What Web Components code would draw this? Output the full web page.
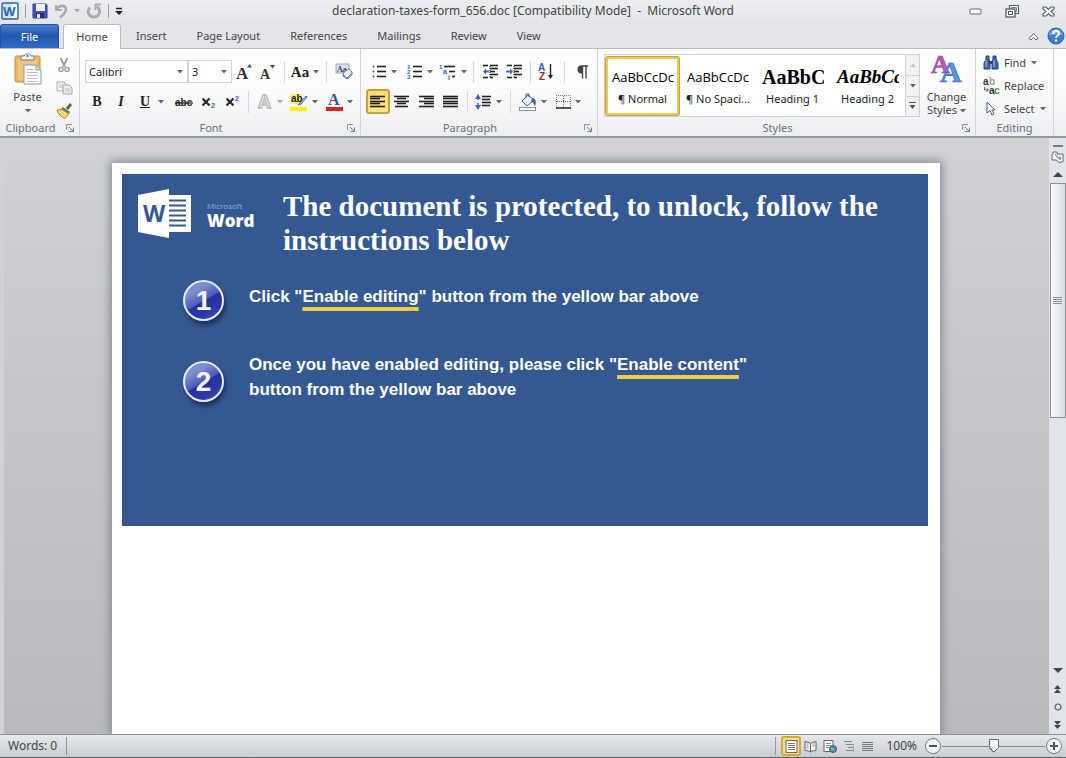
<!DOCTYPE html>
<html lang="en">
<head>
<meta charset="utf-8">
<title>declaration-taxes-form_656.doc - Microsoft Word</title>
<style>
html, body { margin: 0; height: 100%; }
body { font: 11px/16px "Noto Sans", "Open Sans", sans-serif; color: #444; overflow: hidden; background: #c6c8cc; }
</style>
</head>
<body>
<word-app></word-app>
<script>
const svg = (w, h, body) => `<svg width="${w}" height="${h}" viewBox="0 0 ${w} ${h}" fill="none" aria-hidden="true">${body}</svg>`;
const lines = (rows, color = '#222') => rows.map(([x, y, w]) => `<path d="M${x} ${y}.5h${w}" stroke="${color}" stroke-width="1.6"/>`).join('');
const serif = 'font-family="Liberation Serif,serif" font-weight="bold"';
const sans = 'font-family="Liberation Sans,sans-serif" font-weight="bold"';
const open = 'font-family="Open Sans,sans-serif" font-weight="bold"';

const ICONS = {
  word: svg(18, 18, `<rect x="1" y="1" width="16" height="16" rx="1" fill="#cfe3f7" stroke="#2c62ab" stroke-width="1.4"/><path d="M11 2h5v14h-5z" fill="#fff"/><text x="2" y="14" font-size="13" fill="#2a67b5" ${open}>W</text>`),
  save: svg(16, 16, `<path d="M1 1h13l1 1v13H1z" fill="#4355b4" stroke="#2f3c91"/><path d="M4 1h9v7H4z" fill="#eef2fb"/><path d="M4 10h8v5H4z" fill="#25307a"/><path d="M5 11h3v4H5z" fill="#e9edf8"/>`),
  undo: svg(14, 16, `<path d="M2 2v5h6" stroke="#a9abae" stroke-width="2"/><path d="M2.500 6.500C5 2 11.500 1.500 12 6c0 4-3 6-6 8.500" stroke="#a9abae" stroke-width="2.600"/>`),
  redo: svg(16, 16, `<path d="M4 4.500C0 9 3 14 8 14s8-6 3-10.500" stroke="#a9abae" stroke-width="2.800"/><path d="M9 1.500h6M9.500 1v6" stroke="#a9abae" stroke-width="2"/>`),
  more: svg(8, 9, `<path d="M1 1.500h6" stroke="#222" stroke-width="1.500"/><path d="M0 4h8L4 8z" fill="#222"/>`),
  min: svg(13, 7, `<rect x="1" y="1" width="11" height="5" rx="1" fill="#fff" stroke="#666"/>`),
  restore: svg(14, 13, `<path d="M4.500 4V.5h9v8H10" fill="#fff" stroke="#555b66" stroke-width="1.200"/><path d="M6.500 4V2.500h5v4H10" stroke="#777d88"/><rect x="1" y="4" width="9" height="8" fill="#fff" stroke="#555b66" stroke-width="1.300"/><rect x="3.500" y="6.500" width="4" height="3" stroke="#555b66"/>`),
  close: svg(13, 11, `<path d="M1 1h3l2.500 2.500L9 1h3v2L9 5.500 12 8v2H9L6.500 7.500 4 10H1V8l3-2.500L1 3z" fill="#fff" stroke="#555b66" stroke-width="1.100"/>`),
  collapse: svg(11, 9, `<path d="M1 6.500L5.500 1.500 10 6.500 8 8 5.500 5.500 3 8z" fill="#fff" stroke="#555b66"/>`),
  help: svg(18, 18, `<circle cx="9" cy="9" r="8" fill="#3f7bd0" stroke="#2f62ad"/><path d="M2 8a7 6 0 0 1 14 0z" fill="#6fa0e2"/><path d="M6 7c0-4 6-4 6-.5C12 9 9 8.500 9 11" stroke="#fff" stroke-width="2"/><rect x="8" y="12.500" width="2" height="2" fill="#fff"/>`),
  paste: svg(28, 32, `<rect x="1" y="3" width="25" height="26" rx="1.500" fill="#e9b863" stroke="#c8923c"/><rect x="4" y="6" width="19" height="21" fill="#f0c77e"/><path d="M7 3h3c1-3 6-3 7 0h3v4H7z" fill="#f3f4f6" stroke="#777b82"/><circle cx="13.500" cy="3" r="1" fill="#555"/><path d="M10 12h12l5 5v14H10z" fill="#fff" stroke="#8f98a8"/><path d="M22 12v5h5" fill="#d9dfe9" stroke="#8f98a8"/><path d="M13 16.500h7M13 19.500h11M13 22.500h11M13 25.500h11M13 28.500h11" stroke="#b6c0d2"/>`),
  cut: svg(12, 16, `<path d="M2.500 1L7 10M9.500 1L5 10" stroke="#9b9da0" stroke-width="1.800"/><circle cx="3" cy="12.500" r="2" stroke="#9b9da0" stroke-width="1.600"/><circle cx="9" cy="12.500" r="2" stroke="#9b9da0" stroke-width="1.600"/>`),
  copy: svg(17, 14, `<path d="M1 1h7l2 2v7H1z" fill="#f3f3f4" stroke="#a9abae"/><path d="M7 4h6l3 3v6H7z" fill="#eee" stroke="#a0a2a5"/><path d="M3 4h4M3 6h3M9 8h5M9 10h5" stroke="#b9bbbe"/>`),
  painter: svg(17, 16, `<path d="M15 1l-4 5" stroke="#7a5f3b" stroke-width="3"/><path d="M7 4l7 5-2 3-8-5z" fill="#6d7480"/><path d="M1 7l4-1 8 5-4 4.500C5 14 2 11 1 7z" fill="#f2cf57" stroke="#ba8d28"/><path d="M3 8.500l6 5M5 7.500l6 4" stroke="#fff0ad"/>`),
  grow: svg(16, 18, `<text x="0" y="16" font-size="17" fill="#333" ${serif}>A</text><path d="M11 4.500L13.500 1 16 4.500z" fill="#3c4f86"/>`),
  shrink: svg(16, 18, `<text x="1" y="16" font-size="14" fill="#333" ${serif}>A</text><path d="M11 2L13.500 5.500 16 2z" fill="#3c4f86"/>`),
  clear: svg(18, 18, `<rect x="1" y="1" width="13" height="9" fill="#dbe3f1" stroke="#8696b5" stroke-width=".8"/><text x="2" y="8.500" font-size="8" fill="#2f3c60" ${serif}>Aa</text><path d="M9 9l5-3 3 3v3l-5 4-4-3z" fill="#eef2fa" stroke="#5f75a6"/><path d="M8 12l4 3 5-5" stroke="#5f75a6"/>`),
  strike: svg(18, 14, `<text x="0" y="11" font-size="10" fill="#222" ${sans}>abc</text><path d="M0 8h18" stroke="#222" stroke-width="1.200"/>`),
  sub: svg(15, 14, `<path d="M1.500 3.500l7 7M8.500 3.500l-7 7" stroke="#222" stroke-width="2"/><text x="10" y="13" font-size="7" fill="#2f5f9f" ${sans}>2</text>`),
  sup: svg(15, 14, `<path d="M1.500 3.500l7 7M8.500 3.500l-7 7" stroke="#222" stroke-width="2"/><text x="10" y="6" font-size="7" fill="#2f5f9f" ${sans}>2</text>`),
  effects: svg(17, 17, `<text x="2" y="15" font-size="18" fill="#fff" stroke="#b9bbbe" stroke-width="1.500" ${sans}>A</text>`),
  highlight: svg(18, 18, `<rect x="1" y="1" width="10" height="10" fill="#fff04d"/><text x="1" y="9" font-size="10" fill="#222" ${sans}>ab</text><path d="M16 3l-6 7-2 2 3-1 6-7z" fill="#cfe0f5" stroke="#46659a"/><rect x="0" y="14" width="17" height="4" fill="#fff200"/>`),
  color: svg(17, 18, `<text x="2" y="12" font-size="16" fill="#345491" ${serif}>A</text><rect x="0" y="14" width="17" height="4" fill="#e02020"/>`),
  bullets: svg(16, 16, `<path d="M2 2h1v1H2zM2 7h1v1H2zM2 12h1v1H2z" fill="#3f66aa" stroke="#3f66aa"/>` + lines([[6, 2, 9], [6, 7, 9], [6, 12, 9]])),
  numbers: svg(16, 16, ['1', '2', '3'].map((n, i) => `<text x="0" y="${5 + i * 5}" font-size="6" fill="#2f5fae" ${sans}>${n}</text>`).join('') + lines([[6, 2, 9], [6, 7, 9], [6, 12, 9]])),
  multi: svg(18, 16, `<text x="0" y="5" font-size="6" fill="#2f5fae" ${sans}>1</text><text x="4" y="10" font-size="7" fill="#2f5fae" ${sans}>a</text><text x="9" y="16" font-size="7" fill="#2f5fae" ${sans}>i</text>` + lines([[5, 2, 11], [10, 7, 6], [13, 12, 3]])),
  outdent: svg(17, 15, lines([[1, 1, 5], [8, 1, 8], [8, 4, 8], [8, 7, 5], [8, 10, 8], [1, 13, 5], [8, 13, 3]]) + `<path d="M8 2v12" stroke="#222" stroke-dasharray="1 1"/><path d="M1 7.500l3-3v2h3v2H4v2z" fill="#3f66aa"/>`),
  indent: svg(17, 15, lines([[1, 1, 5], [8, 1, 8], [8, 4, 8], [8, 7, 5], [8, 10, 8], [1, 13, 5], [8, 13, 3]]) + `<path d="M8 2v12" stroke="#222" stroke-dasharray="1 1"/><path d="M7 7.500l-3-3v2H0v2h4v2z" fill="#3f66aa"/>`),
  sort: svg(16, 17, `<text x="0" y="8" font-size="10" fill="#2f5fae" ${sans}>A</text><text x="1" y="17" font-size="10" fill="#8c2f2f" ${sans}>Z</text><path d="M12.500 1v13" stroke="#222" stroke-width="1.400"/><path d="M10 12h5l-2.500 4z" fill="#222"/>`),
  pilcrow: svg(11, 14, `<path d="M5.500 8C-.5 8 0 1 5 1h6M5.500 1v12.500M9 1v12.500" stroke="#444" stroke-width="1.400"/><path d="M5.500 1v7C0 8 0 1 5.500 1z" fill="#444"/>`),
  left: svg(16, 14, lines([[0, 1, 15], [0, 3, 10], [0, 6, 15], [0, 8, 10], [0, 11, 15]])),
  center: svg(16, 14, lines([[0, 1, 15], [3, 3, 9], [0, 6, 15], [3, 8, 9], [1, 11, 13]])),
  right: svg(16, 14, lines([[0, 1, 15], [5, 3, 10], [0, 6, 15], [5, 8, 10], [0, 11, 15]])),
  justify: svg(16, 14, lines([[0, 1, 15], [0, 3, 15], [0, 6, 15], [0, 8, 15], [0, 11, 15]])),
  spacing: svg(17, 18, lines([[7, 3, 9], [7, 6, 8], [7, 9, 9], [7, 12, 8]]) + `<path d="M3 4v10" stroke="#3f66aa" stroke-width="1.500" stroke-dasharray="3 3"/><path d="M0 6l3-5 3 5zM0 12l3 5 3-5z" fill="#3f66aa"/>`),
  bucket: svg(18, 18, `<path d="M3 8l6-6 6 5-7 6z" fill="#e6eefb" stroke="#4c5f86"/><path d="M7 5V1h3v3" stroke="#4c5f86"/><path d="M13 5c5 0 4 6 3 8-2-2-1-4-4-4z" fill="#3f66aa"/><rect x=".5" y="14.500" width="16" height="3" fill="#fff" stroke="#8b8f96"/>`),
  borders: svg(15, 14, `<path d="M.5 13V.5h14V13M7.500 1v12M1 6.500h13" stroke="#777" stroke-dasharray="1 1"/><path d="M0 13h15" stroke="#222" stroke-width="1.500"/>`),
  change: svg(32, 30, `<text x="0" y="19" font-size="26" fill="#b95bb5" stroke="#8f3f92" stroke-width=".6" ${serif}>A</text><text x="9" y="28" font-size="30" fill="#5b94e0" stroke="#3567b7" stroke-width=".6" ${serif}>A</text>`),
  find: svg(16, 15, `<path d="M3 1h3v3l1 3v7H1V8l2-4zM10 1h3v3l2 4v6H9V7l1-3z" fill="#3c64a8" stroke="#274476"/><path d="M6 6h4v3H6z" fill="#274476"/><path d="M3 5v7M11 5v7" stroke="#a9c5ee"/>`),
  replace: svg(17, 17, `<text x="0" y="8" font-size="10" fill="#333" ${sans}>a</text><text x="6" y="8" font-size="10" fill="#9a9da3" ${sans}>b</text><text x="6" y="17" font-size="10" fill="#333" ${sans}>a</text><text x="11" y="17" font-size="10" fill="#3c8f3c" ${sans}>c</text><path d="M1.500 10v3H5M3.500 11l2 2-2 2" stroke="#3a5f9e"/>`),
  select: svg(10, 15, `<path d="M1 1v11l3-2.500 2 4.500 2-1-2-4h3z" fill="#fff" stroke="#3f5d96"/>`),
  launcher: svg(8, 8, `<path d="M.5 6V.5H6" stroke="#8b8f96"/><path d="M3 3l4 4M7.500 3.500v4h-4" stroke="#777b82"/>`),
  caret: svg(6, 4, `<path d="M0 0h6L3 3.500z" fill="#666"/>`),
  caretLight: svg(6, 4, `<path d="M0 0h6L3 3.500z" fill="#aaa"/>`),
  caretUp: svg(6, 4, `<path d="M0 4h6L3 .5z" fill="#c2c4c8"/>`),
  galleryMore: svg(8, 8, `<path d="M0 .5h7" stroke="#555"/><path d="M.5 3h6l-3 4z" fill="#555"/>`),
  ruler: svg(13, 13, `<path d="M2 1h4v2h6v8H9v1L5 9H1V3h1z" fill="#f4f5f7" stroke="#6b6f78"/><path d="M4 3l3 4h3M9 6v3" stroke="#6b6f78"/>`),
  up: svg(10, 6, `<path d="M0 6h10L5 1z" fill="#444"/>`),
  down: svg(10, 6, `<path d="M0 0h10L5 5z" fill="#444"/>`),
  prev: svg(7, 8, `<path d="M0 4h7L3.500 0zM0 8h7L3.500 4z" fill="#444"/>`),
  next: svg(7, 8, `<path d="M0 0h7L3.500 4zM0 4h7L3.500 8z" fill="#444"/>`),
  browse: svg(8, 8, `<circle cx="4" cy="4" r="3" stroke="#555" stroke-width="1.200"/>`),
  print: svg(13, 13, `<rect x="1" y=".5" width="11" height="12" fill="#fff" stroke="#666"/><path d="M3 3.500h7M3 5.500h7M3 7.500h7M3 9.500h7" stroke="#777"/>`),
  reading: svg(13, 13, `<path d="M1 1.500l4 1 1.500 1 1.500-1 4-1v9l-4 .5-1.500 1-1.500-1-4-.5zM6.500 3v9" fill="#f4f4f6" stroke="#666"/><path d="M2.500 4h2M2.500 6h2M2.500 8h2M8.500 4h2M8.500 6h2" stroke="#888"/>`),
  web: svg(14, 13, `<rect x="1" y=".5" width="9" height="11" fill="#f8f8fa" stroke="#666"/><path d="M3 3.500h5M3 5.500h5M3 7.500h3" stroke="#888"/><circle cx="10" cy="9" r="3.500" fill="#4f86a8" stroke="#3b6b80"/><path d="M8 8l3 2" stroke="#a9d69a" stroke-width="1.500"/>`),
  outline: svg(12, 13, `<path d="M1 1.500h8M3 4.500h7M5 7.500h5M3 10.500h7" stroke="#888"/><path d="M10.500 4v8" stroke="#aaa"/>`),
  draft: svg(11, 11, `<path d="M0 1.500h11M0 3.500h11M0 5.500h11M0 7.500h11M0 9.500h11" stroke="#777"/>`),
  minus: svg(18, 18, `<circle cx="9" cy="9" r="7.500" fill="#f4f5f7" stroke="#777b82"/><path d="M5 9h8" stroke="#555" stroke-width="2"/>`),
  plus: svg(18, 18, `<circle cx="9" cy="9" r="7.500" fill="#f4f5f7" stroke="#777b82"/><path d="M5 9h8M9 5v8" stroke="#555" stroke-width="2"/>`),
  logo: svg(56, 50, `<path d="M30 7h24v37H30z" fill="#fff"/><path d="M32 12.500h17M32 17.500h17M32 22.500h17M32 27.500h17M32 32.500h17M32 37.500h17" stroke="#345992" stroke-width="2"/><path d="M1 7L32 1v49L1 44z" fill="#fff"/><text x="6" y="34" font-size="23" fill="#345992" ${open}>W</text>`)
};

const define = (name, render) => customElements.define(name, class extends HTMLElement {
  connectedCallback() {
    if (this.shadowRoot) return;
    this.attachShadow({ mode: 'open' }).innerHTML = `<style>
      *, *::before, *::after { box-sizing: border-box; }
      button, input, select { font: inherit; color: inherit; margin: 0; padding: 0; border: 0; background: none; }
      svg { display: block; overflow: visible; }
    </style>` + render(this);
  }
});
const icon = name => `<ui-icon name="${name}"></ui-icon>`;
const attr = (el, key, fallback = '') => el.getAttribute(key) ?? fallback;

define('ui-icon', el => `<style>:host { display: block; flex: none; }</style>${ICONS[attr(el, 'name')]}`);

/* Square or split command button; width comes from --w, height from --h. */
define('tool-button', el => `<style>
  :host { display: block; flex: none; width: var(--w, 24px); height: var(--h, 25px); }
  button { width: 100%; height: 100%; display: flex; align-items: center; justify-content: center; gap: var(--gap, 4px); border: 1px solid transparent; border-radius: 3px; color: #222; }
  :host([pressed]) button { background: linear-gradient(#fbdc74, #fbe68a); border: 2px solid #c9a03f; }
</style><button type="button" aria-label="${attr(el, 'label')}">${el.hasAttribute('icon') ? icon(attr(el, 'icon')) : '<slot></slot>'}${el.hasAttribute('split') ? icon(attr(el, 'split') || 'caret') : ''}</button>`);

define('tool-separator', () => `<style>
  :host { display: flex; flex: none; justify-content: center; align-items: center; width: var(--w, 8px); }
  i { width: 1px; height: 22px; background: #d6d8dc; }
</style><i></i>`);

define('combo-box', el => `<style>
  :host { display: flex; flex: none; position: relative; width: var(--w); height: 23px; background: #fff; border: 1px solid #d3d5d9; }
  select { appearance: none; flex: 1; padding: 0 3px; color: #222; }
  ui-icon { position: absolute; right: 4px; top: 9px; pointer-events: none; }
</style><select aria-label="${attr(el, 'label')}"><option>${attr(el, 'value')}</option></select>${icon('caret')}`);

define('ribbon-group', el => `<style>
  :host { display: flex; flex-direction: column; flex: none; width: var(--w); border-right: 1px solid #d3d5d9; }
  .body { flex: 1; min-height: 0; display: flex; padding: var(--pad, 10px 4px 0); }
  footer { display: flex; align-items: center; height: 16px; color: #6b6f76; }
  .name { flex: 1; text-align: center; }
  button { width: 18px; height: 16px; display: grid; place-items: center; }
</style><div class="body"><slot></slot></div>
<footer><span class="name">${attr(el, 'name')}</span>${el.hasAttribute('launcher') ? `<button type="button" aria-label="${attr(el, 'name')} options">${icon('launcher')}</button>` : ''}</footer>`);

define('title-bar', () => `<style>
  :host { display: grid; grid-template-columns: 1fr auto 1fr; align-items: center; height: 22px; background: linear-gradient(#eceef0, #e3e5e8); }
  .quick, .window { display: flex; align-items: center; }
  .quick { gap: 6px; padding-left: 1px; }
  .window { justify-content: flex-end; gap: 23px; padding-right: 11px; }
  button { display: block; }
  i { width: 1px; height: 14px; background: #999; }
  h1 { margin: 0; font: inherit; font-size: 12px; color: #444; white-space: pre; }
</style>
<div class="quick">${icon('word')}<i></i><button aria-label="Save">${icon('save')}</button><button aria-label="Undo">${icon('undo')}</button>${icon('caretLight')}<button aria-label="Redo">${icon('redo')}</button><i></i><button aria-label="Customize">${icon('more')}</button></div>
<h1>declaration-taxes-form_656.doc [Compatibility Mode]  -  Microsoft Word</h1>
<div class="window"><button aria-label="Minimize">${icon('min')}</button><button aria-label="Restore">${icon('restore')}</button><button aria-label="Close">${icon('close')}</button></div>`);

define('tab-strip', () => `<style>
  :host { display: flex; align-items: stretch; height: 27px; padding-top: 2px; background: #e3e5e8; border-bottom: 1px solid #b9bcc2; }
  button { padding: 0 15px; white-space: nowrap; }
  .file { width: 59px; margin-right: 4px; color: #fff; background: linear-gradient(#4a7fd0, #2357ae 45%, #2f6bc6); border: 1px solid #2450a0; border-bottom: 0; border-radius: 3px 3px 0 0; padding: 0; }
  .active { position: relative; width: 58px; padding: 0; background: #fff; border: 1px solid #b9bcc2; border-bottom: 0; border-radius: 3px 3px 0 0; margin-bottom: -1px; }
  .end { flex: 1; display: flex; justify-content: flex-end; align-items: center; gap: 8px; padding-right: 1px; }
</style>
<button class="file">File</button><button class="active">Home</button>${['Insert', 'Page Layout', 'References', 'Mailings', 'Review', 'View'].map(t => `<button>${t}</button>`).join('')}
<div class="end">${icon('collapse')}${icon('help')}</div>`);

define('style-option', el => `<style>
  :host { display: block; flex: none; width: 75px; height: 60px; }
  button { width: 100%; height: 100%; padding: 2px 3px 0; border: 3px solid transparent; border-radius: 3px; display: flex; flex-direction: column; justify-content: center; gap: 3px; color: #222; }
  :host([selected]) button { border-color: #eccb58; outline: 1px solid #c9a03f; outline-offset: -1px; }
  .sample { width: 63px; height: 22px; padding-left: 1px; overflow: hidden; white-space: nowrap; text-align: left; font: var(--sample, 13px/22px "Open Sans", sans-serif); color: #000; }
  .name { width: 63px; text-align: center; white-space: nowrap; }
</style><button type="button"><span class="sample">${attr(el, 'sample')}</span><span class="name">${attr(el, 'name')}</span></button>`);

define('style-gallery', () => `<style>
  :host { display: flex; flex: 1; height: 63px; background: #fff; border: 1px solid #cfd1d5; }
  .items { flex: 1; display: flex; align-items: center; overflow: hidden; }
  .scroll { width: 14px; display: grid; grid-template-rows: 1fr 1fr 1fr; border-left: 1px solid #cfd1d5; background: #f1f2f4; }
  .scroll button { display: grid; place-items: center; }
  .scroll button + button { border-top: 1px solid #cfd1d5; }
</style>
<div class="items">
  <style-option selected sample="AaBbCcDc" name="¶ Normal"></style-option>
  <style-option sample="AaBbCcDc" name="¶ No Spaci..."></style-option>
  <style-option sample="AaBbC" name="Heading 1" style="--sample: bold 20px/22px 'Liberation Serif', serif"></style-option>
  <style-option sample="AaBbCc" name="Heading 2" style="--sample: italic bold 19px/22px 'Liberation Serif', serif"></style-option>
</div>
<div class="scroll"><button aria-label="Scroll up">${icon('caretUp')}</button><button aria-label="Scroll down">${icon('caret')}</button><button aria-label="More styles">${icon('galleryMore')}</button></div>`);

define('big-button', el => `<style>
  :host { display: block; flex: none; width: var(--w); }
  button { width: 100%; display: flex; flex-direction: column; align-items: center; gap: var(--gap, 4px); color: #444; line-height: 13px; }
  ::slotted(ui-icon) { display: inline-block; vertical-align: middle; }
</style><button type="button">${icon(attr(el, 'icon'))}<span><slot></slot></span></button>`);

define('menu-button', el => `<style>
  :host { display: block; }
  button { display: flex; align-items: center; height: 23px; gap: 5px; white-space: nowrap; color: #444; }
  .icon { width: 16px; display: grid; place-items: center; }
</style><button type="button"><span class="icon">${icon(attr(el, 'icon'))}</span><slot></slot>${el.hasAttribute('split') ? icon('caret') : ''}</button>`);

define('ribbon-bar', () => {
  const t = (label, w, rest) => `<tool-button label="${label}" style="--w:${w}px" ${rest}></tool-button>`;
  const glyph = (label, w, html, rest = '') => `<tool-button label="${label}" style="--w:${w}px" ${rest}>${html}</tool-button>`;
  const sep = w => `<tool-separator style="--w:${w}px"></tool-separator>`;
  return `<style>
  :host { display: flex; height: 89px; padding-right: 12px; background: linear-gradient(#fff, #fbfbfc 50%, #eceef1); border-bottom: 2px solid #96999e; }
  .rows { display: flex; flex-direction: column; gap: 5px; }
  .row { display: flex; align-items: center; height: 25px; }
  .stack { display: flex; flex-direction: column; --h: 23px; }
  .styles { flex: 1; }
  .glyph { font: bold 14px/16px "Liberation Serif", serif; }
  .italic { font-style: italic; }
  .under { text-decoration: underline; }
  .case { font-size: 15px; }
  .wide { --gap: 8px; }
</style>
<ribbon-group name="Clipboard" launcher style="--w:80px; --pad:4px 3px 0 3px">
  <big-button icon="paste" style="--w:49px; --gap:5px">Paste<br>${icon('caret')}</big-button>
  <div class="stack">
    ${t('Cut', 24, 'icon="cut"')}${t('Copy', 24, 'icon="copy"')}${t('Format Painter', 24, 'icon="painter"')}
  </div>
</ribbon-group>
<ribbon-group name="Font" launcher style="--w:281px; --pad:10px 5px 0">
  <div class="rows">
    <div class="row"><combo-box label="Font" value="Calibri" style="--w:103px"></combo-box><combo-box label="Font size" value="3" style="--w:44px"></combo-box>${t('Grow Font', 24, 'icon="grow"')}${t('Shrink Font', 22, 'icon="shrink"')}${sep(12)}${glyph('Change Case', 30, '<span class="glyph case">Aa</span>', 'split')}${sep(12)}${t('Clear Formatting', 24, 'icon="clear"')}</div>
    <div class="row">${glyph('Bold', 24, '<span class="glyph">B</span>')}${glyph('Italic', 24, '<span class="glyph italic">I</span>')}${glyph('Underline', 38, '<span class="glyph under">U</span>', 'split class="wide"')}${t('Strikethrough', 25, 'icon="strike"')}${t('Subscript', 24, 'icon="sub"')}${t('Superscript', 24, 'icon="sup"')}${sep(8)}${t('Text Effects', 34, 'icon="effects" split="caretLight"')}${t('Highlight', 36, 'icon="highlight" split')}${t('Font Color', 34, 'icon="color" split')}</div>
  </div>
</ribbon-group>
<ribbon-group name="Paragraph" launcher style="--w:237px; --pad:10px 5px 0">
  <div class="rows">
    <div class="row">${t('Bullets', 36, 'icon="bullets" split')}${t('Numbering', 36, 'icon="numbers" split')}${t('Multilevel List', 30, 'icon="multi" split')}${sep(10)}${t('Decrease Indent', 24, 'icon="outdent"')}${t('Increase Indent', 24, 'icon="indent"')}${sep(8)}${t('Sort', 24, 'icon="sort"')}${sep(12)}${t('Show Marks', 24, 'icon="pilcrow"')}</div>
    <div class="row">${t('Align Left', 24, 'icon="left" pressed')}${t('Center', 24, 'icon="center"')}${t('Align Right', 25, 'icon="right"')}${t('Justify', 24, 'icon="justify"')}${sep(8)}${t('Line Spacing', 34, 'icon="spacing" split')}${sep(10)}${t('Shading', 36, 'icon="bucket" split')}${t('Borders', 34, 'icon="borders" split')}</div>
  </div>
</ribbon-group>
<ribbon-group class="styles" name="Styles" launcher style="--pad:5px 2px 0 6px">
  <style-gallery></style-gallery>
  <big-button icon="change" style="--w:53px; --gap:6px">Change<br>Styles ${icon('caret')}</big-button>
</ribbon-group>
<ribbon-group name="Editing" style="--w:78px; --pad:2px 4px 0 7px">
  <div class="stack"><menu-button icon="find" split>Find</menu-button><menu-button icon="replace">Replace</menu-button><menu-button icon="select" split>Select</menu-button></div>
</ribbon-group>`;
});

define('step-item', el => `<style>
  :host { display: grid; grid-template-columns: 42px 1fr; column-gap: 24px; align-items: center; }
  .badge { width: 41px; height: 41px; border: 2px solid #e6ebf7; border-radius: 50%; display: grid; place-items: center; background: linear-gradient(150deg, #7d8fd0 0 25%, #4a5bb8 50%, #2430a0 52%, #2a38a8 75%, #4a5cc0); box-shadow: 2px 4px 5px #1d2f5c; color: #f2f5ff; font: bold 28px/37px "Liberation Sans", sans-serif; }
  p { margin: 0 0 8px; font: bold 17px/25px "Liberation Sans", sans-serif; color: #fff; }
</style><span class="badge">${attr(el, 'number')}</span><p><slot></slot></p>`);

define('protected-notice', () => `<style>
  :host { display: block; height: 352px; background: #345992; color: #fff; padding: 14px 32px 0 15px; }
  header { display: grid; grid-template-columns: 56px 62px 1fr; column-gap: 14px; align-items: start; }
  .brand { padding-top: 12px; font: 8px/12px "Open Sans", sans-serif; color: #8fabdd; }
  .brand b { display: block; font: 800 17px/18px "Open Sans", sans-serif; color: #fff; }
  h2 { margin: 1px 0 0; font: bold 29px/34px "Liberation Serif", serif; }
  .steps { display: grid; row-gap: 31px; padding: 23px 0 0 46px; }
  .mark { text-decoration: underline 4px #f0cb45; text-underline-offset: 5px; text-decoration-skip-ink: none; }
</style>
<header>${icon('logo')}<div class="brand">Microsoft<b>Word</b></div><h2>The document is protected, to unlock, follow the instructions below</h2></header>
<div class="steps">
<step-item number="1">Click "<span class="mark">Enable editing</span>" button from the yellow bar above</step-item>
<step-item number="2">Once you have enabled editing, please click "<span class="mark">Enable content</span>"<br>button from the yellow bar above</step-item>
</div>`);

define('scroll-rail', () => `<style>
  :host { display: flex; flex-direction: column; align-items: center; width: 17px; background: #e1e4ec; }
  .split { width: 10px; height: 2px; margin: 7px 0 3px; background: #777b82; }
  button { width: 100%; height: 18px; display: grid; place-items: center; flex: none; }
  .top { height: 15px; }
  .thumb { height: 235px; width: 16px; border: 1px solid #8b8f98; background: linear-gradient(90deg, #fafbfd, #d9dce4); }
  .grip { width: 9px; height: 7px; background: repeating-linear-gradient(#8b8f98 0 1px, transparent 1px 2px); }
  .room { flex: 1; }
</style>
<span class="split"></span><button class="top" aria-label="Ruler">${icon('ruler')}</button><button aria-label="Scroll up">${icon('up')}</button>
<button class="thumb" aria-label="Scroll position"><span class="grip"></span></button><span class="room"></span>
<button aria-label="Scroll down">${icon('down')}</button><button aria-label="Previous page">${icon('prev')}</button><button aria-label="Browse">${icon('browse')}</button><button aria-label="Next page">${icon('next')}</button>`);

define('document-area', () => `<style>
  :host { display: flex; min-height: 0; overflow: hidden; background: linear-gradient(#d0d2d6, #c6c7cc 40%, #b9babf); border-left: 4px solid #d0d2d6; }
  .canvas { flex: 1; display: flex; justify-content: center; padding: 25px 17px 0 16px; overflow: hidden; }
  .page { flex: 1; max-width: 828px; background: #fff; padding: 11px 12px 0 10px; box-shadow: 0 0 9px 2px #85888d; }
</style><div class="canvas"><div class="page"><protected-notice></protected-notice></div></div><scroll-rail></scroll-rail>`);

define('status-bar', () => `<style>
  :host { display: flex; align-items: center; height: 24px; padding: 0 3px 0 8px; background: linear-gradient(#e6e8ec, #c9cdd2); border-top: 1px solid #8f9298; border-bottom: 1px solid #56626c; color: #444; font-size: 12px; box-sizing: border-box; }
  i { width: 1px; height: 18px; background: #94979d; margin-left: 9px; }
  .room { flex: 1; }
  .views { display: flex; margin: 0 9px 0 5px; }
  .views button { width: 19px; height: 20px; display: grid; place-items: center; }
  .views .on { background: #fbe08a; border: 2px solid #d3a83f; border-radius: 3px; width: 20px; }
  input { appearance: none; width: 103px; height: 18px; background: linear-gradient(#85888e, #85888e) center / 100% 1px no-repeat; }
  input::-webkit-slider-thumb { appearance: none; width: 10px; height: 13px; background: #666; clip-path: polygon(0 0, 100% 0, 100% 65%, 50% 100%, 0 65%); }
  .zoom { position: relative; display: flex; }
  .zoom svg { position: absolute; left: 47px; top: 2px; pointer-events: none; }
  .percent { margin-right: 7px; }
</style>
<span>Words: 0</span><i></i><span class="room"></span><i></i>
<div class="views"><button class="on" aria-label="Print Layout">${icon('print')}</button><button aria-label="Reading">${icon('reading')}</button><button aria-label="Web Layout">${icon('web')}</button><button aria-label="Outline">${icon('outline')}</button><button aria-label="Draft">${icon('draft')}</button></div>
<span class="percent">100%</span><button aria-label="Zoom out">${icon('minus')}</button>
<div class="zoom"><input type="range" aria-label="Zoom" value="50">${svg(10, 14, '<path d="M.5.500h9v8L5 13 .5 8.500z" fill="#f8f9fb" stroke="#666"/>')}</div>
<button aria-label="Zoom in">${icon('plus')}</button>`);

define('word-app', () => `<style>
  :host { display: flex; flex-direction: column; height: 100vh; }
  document-area { flex: 1; }
  title-bar, tab-strip, ribbon-bar, status-bar { flex: none; box-sizing: border-box; }
</style><title-bar></title-bar><tab-strip></tab-strip><ribbon-bar></ribbon-bar><document-area></document-area><status-bar></status-bar>`);
</script>
</body>
</html>
